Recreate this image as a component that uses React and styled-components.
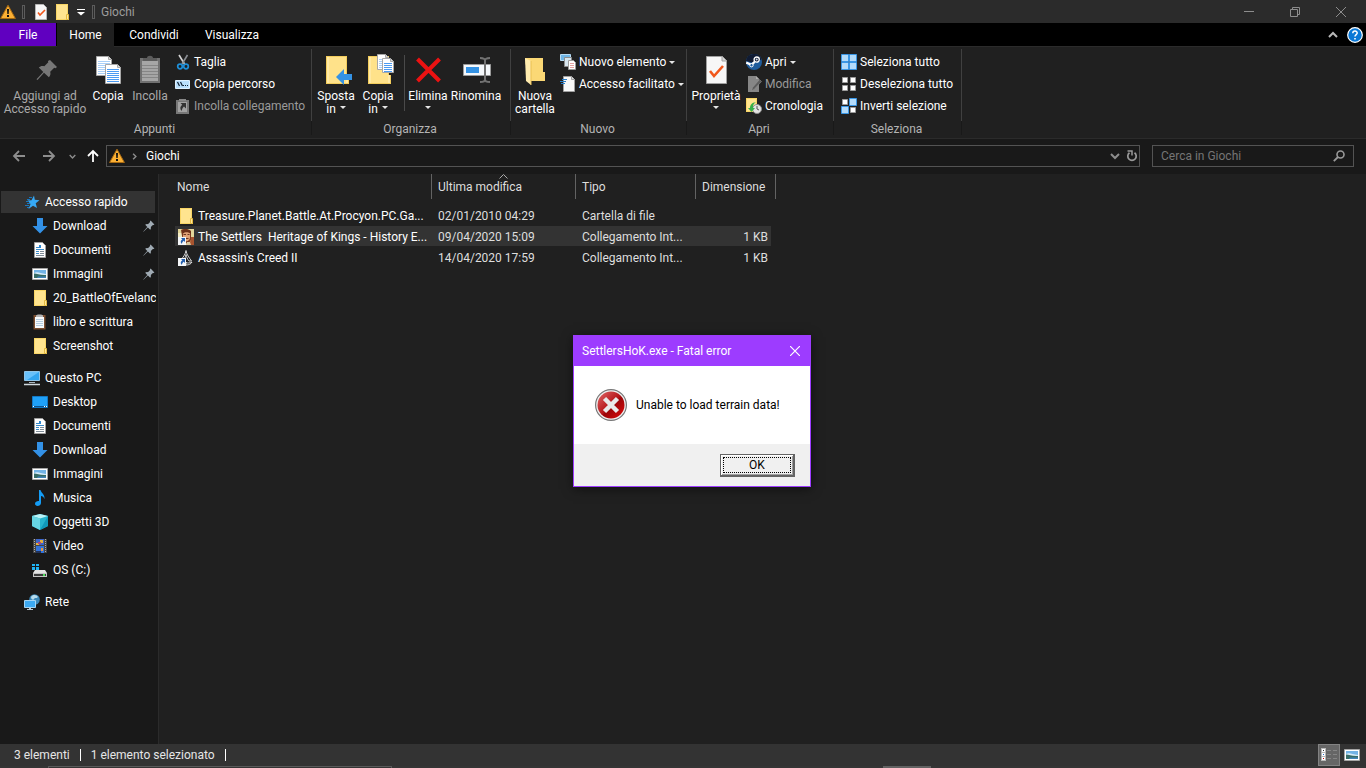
import React from 'react'
import styled, { createGlobalStyle } from 'styled-components'

const colors = {
  window: '#202020',
  panel: '#191919',
  bar: '#2b2b2b',
  selected: '#333333',
  accent: '#9d3cff',
  accentDark: '#6000c0',
  text: '#ffffff',
  muted: '#9d9d9d'
}

const GlobalStyle = createGlobalStyle`
  * {
    box-sizing: border-box;
  }
  body {
    margin: 0;
    background: ${colors.window};
    color: ${colors.text};
    font-family: Roboto, 'Open Sans', sans-serif;
    font-size: 12px;
    line-height: 16px;
  }
  button, input {
    margin: 0;
    padding: 0;
    border: 0;
    background: none;
    color: inherit;
    font: inherit;
    outline: none;
  }
  svg {
    display: block;
    flex: none;
  }
`

const Window = styled.div`
  display: flex;
  flex-direction: column;
  height: 100vh;
  overflow: hidden;
`

/* title bar */

const TitleBar = styled.header`
  display: flex;
  align-items: center;
  gap: 6px;
  height: 23px;
  flex: none;
  background: ${colors.bar};
  color: ${colors.muted};
`

const TitleSeparator = styled.span`
  width: 3px;
  height: 14px;
  border: 1px solid #5c5c5c;
`

const Title = styled.h1`
  flex: 1;
  margin: 0;
  font-size: 12px;
  font-weight: 400;
`

const WindowButtons = styled.div`
  display: flex;
  padding-right: 2px;
`

const WindowButton = styled.button`
  display: flex;
  align-items: center;
  justify-content: center;
  width: 46px;
  height: 20px;
`

/* tabs */

const Tabs = styled.nav`
  display: flex;
  height: 23px;
  flex: none;
  background: #000;
`

const Tab = styled.button`
  width: ${props => props.$width}px;
  height: 23px;
`

const FileTab = styled(Tab)`
  margin-right: 1px;
  background: ${colors.accentDark};
`

const ActiveTab = styled(Tab)`
  position: relative;
  height: 24px;
  background: ${colors.window};
`

const TabActions = styled.div`
  display: flex;
  align-items: center;
  gap: 9px;
  margin-left: auto;
  padding-right: 3px;
`

const PlainButton = styled.button`
  display: flex;
  align-items: center;
  justify-content: center;
`

/* ribbon */

const Ribbon = styled.section`
  display: flex;
  height: 93px;
  flex: none;
  border-top: 1px solid ${colors.bar};
  border-bottom: 1px solid ${colors.bar};
`

const Group = styled.div`
  display: flex;
  flex-direction: column;
  width: ${props => props.$width}px;
  padding: 0 6px 0 3px;
  background: linear-gradient(#404040 0 72px, #191919 72px) right 2px / 1px 86px no-repeat;
`

const GroupItems = styled.div`
  display: flex;
  height: 74px;
`

const GroupLabel = styled.div`
  text-align: center;
  color: #b4b4b4;
`

const BigButton = styled.button`
  display: flex;
  flex-direction: column;
  flex: none;
  align-items: center;
  width: ${props => props.$width || 42}px;
  padding-top: 7px;
  line-height: 13px;
  white-space: nowrap;
  color: ${props => (props.disabled ? '#aaaaaa' : colors.text)};

  svg:first-child {
    margin-bottom: 4px;
  }
`

const Line = styled.span`
  display: flex;
  align-items: center;
  justify-content: center;
  gap: 4px;
  height: 13px;
`

const SmallButtons = styled.div`
  display: flex;
  flex-direction: column;
  padding: 4px 0 0 4px;
`

const SmallButton = styled.button`
  display: flex;
  align-items: center;
  gap: 3px;
  height: 22px;
  white-space: nowrap;
  color: ${props => (props.disabled ? '#9a9a9a' : colors.text)};
`

const GroupDivider = styled.span`
  width: 1px;
  height: 56px;
  margin: 8px 2px 0 5px;
  background: #4a4a4a;
`

/* address bar */

const AddressBar = styled.div`
  display: flex;
  height: 35px;
  flex: none;
  padding: 6px 12px 0 0;
  background: ${colors.panel};
`

const NavButton = styled(PlainButton)`
  width: ${props => props.$width}px;
  height: 22px;
`

const AddressBox = styled.div`
  display: flex;
  align-items: center;
  flex: 1;
  height: 22px;
  margin: 0 12px 0 4px;
  border: 1px solid #535353;
  padding-left: 2px;
`

const Crumb = styled.button`
  flex: 1;
  padding-left: 3px;
  text-align: left;
`

const SearchBox = styled.label`
  display: flex;
  align-items: center;
  width: 202px;
  height: 22px;
  padding: 0 8px;
  border: 1px solid #535353;

  input {
    flex: 1;
    min-width: 0;
  }
  input::placeholder {
    color: #757575;
    opacity: 1;
  }
`

/* body */

const Body = styled.div`
  display: flex;
  flex: 1;
  min-height: 0;
`

const Sidebar = styled.nav`
  width: 159px;
  flex: none;
  padding-top: 16px;
  background: ${colors.panel};
  border-right: 1px solid ${colors.bar};
`

const TreeGroup = styled.ul`
  margin: 0 2px 10px 0;
  padding: 0;
  overflow: hidden;
  list-style: none;
`

const TreeItem = styled.li`
  display: flex;
  align-items: center;
  gap: 5px;
  height: 22px;
  margin: 0 1px 2px;
  padding-left: ${props => (props.$root ? 23 : 31)}px;
  background: ${props => (props.$selected ? colors.selected : 'none')};

  a {
    flex: 1;
    white-space: nowrap;
    color: inherit;
    text-decoration: none;
  }
  &:last-child {
    margin-bottom: 0;
  }
`

const Tree = styled.div`
  padding-top: 1px;
`

const Content = styled.main`
  flex: 1;
  padding-left: 16px;
`

const FileTable = styled.table`
  width: 601px;
  table-layout: fixed;
  border-collapse: separate;
  border-spacing: 0;

  tbody::before {
    content: '';
    display: block;
    height: 6px;
  }
`

const HeaderCell = styled.th`
  position: relative;
  width: ${props => props.$width}px;
  height: 25px;
  padding: 0 0 0 ${props => (props.$first ? 2 : 6)}px;
  border-right: 1px solid #636363;
  font-weight: 400;
  text-align: left;
  color: #dedede;
`

const SortMark = styled.svg`
  position: absolute;
  top: 0;
  left: calc(50% - 5px);
`

const Cell = styled.td`
  height: 21px;
  padding: 0 8px 0 6px;
  overflow: hidden;
  white-space: nowrap;
  color: #dedede;
  text-align: ${props => (props.$right ? 'right' : 'left')};
`

const NameCell = styled(Cell)`
  padding: 0 0 0 3px;
  color: ${colors.text};
`

const FileName = styled.span`
  display: flex;
  align-items: center;
  gap: 4px;

  span {
    white-space: pre;
  }
`

const FileRow = styled.tr`
  td {
    background: ${props =>
      props.$selected
        ? `linear-gradient(${colors.selected}, ${colors.selected}) 0 0 / 100% 20px no-repeat`
        : 'none'};
  }
  td:last-child {
    background-size: calc(100% - 5px) 20px;
  }
`

/* status bar */

const StatusBar = styled.footer`
  display: flex;
  align-items: center;
  gap: 10px;
  height: 22px;
  flex: none;
  padding: 0 7px 0 14px;
  background: ${colors.selected};
  color: #e6e6e6;
`

const StatusSeparator = styled.span`
  width: 1px;
  height: 12px;
  background: #fff;
`

const ViewButtons = styled.div`
  display: flex;
  align-items: center;
  gap: 4px;
  margin-left: auto;
`

const ViewButton = styled(PlainButton)`
  height: 22px;
  width: ${props => (props.$active ? 22 : 15)}px;
  background: ${props => (props.$active ? '#666666' : 'none')};
  border: ${props => (props.$active ? '1px solid #838383' : '0')};
`

const TaskbarEdge = styled.div`
  display: flex;
  justify-content: space-between;
  height: 2px;
  flex: none;
  padding: 0 435px 0 48px;
  background: #353535;
`

const TaskbarSearch = styled.span`
  width: 344px;
  border: 1px solid #5a5a5a;
  border-bottom: 0;
`

const TaskbarApp = styled.span`
  width: 48px;
  background: #626262;
`

/* error dialog */

const Dialog = styled.div`
  position: absolute;
  top: 335px;
  left: 573px;
  width: 238px;
  border: 1px solid ${colors.accent};
  background: #fff;
  color: #000;
  box-shadow: 0 2px 10px rgba(0, 0, 0, 0.5);
`

const DialogTitle = styled.div`
  display: flex;
  align-items: center;
  justify-content: space-between;
  height: 30px;
  padding: 0 10px 0 8px;
  background: ${colors.accent};
  color: #fff;
`

const DialogBody = styled.div`
  display: flex;
  align-items: center;
  gap: 9px;
  height: 78px;
  padding-left: 21px;
`

const DialogFooter = styled.div`
  display: flex;
  align-items: center;
  justify-content: flex-end;
  height: 42px;
  padding-right: 15px;
  background: #f0f0f0;
`

const OkButton = styled.button`
  width: 75px;
  height: 23px;
  border: 1px solid #646464;
  border-right-width: 2px;
  border-bottom-width: 2px;
  background: #f0f0f0;
  box-shadow: inset 1px 1px #fff, inset -1px -1px #a0a0a0;
  line-height: 14px;

  span {
    display: block;
    margin: 0 2px;
    border: 1px dotted #000;
  }
`

/* icons */

const WarningIcon = () => (
  <svg width="16" height="16" viewBox="0 0 16 16">
    <path d="M8 1.2 15.4 14.5H.6z" fill="#fbb034" stroke="#a86a12" strokeLinejoin="round" />
    <path d="M7 5h2l-.3 5H7.3zM7 11h2v2H7z" fill="#111" />
  </svg>
)

const FolderIcon = () => (
  <svg width="16" height="16" viewBox="0 0 16 16">
    <path d="M2 0h12v12h1v4H2z" fill="#f8d565" />
    <path d="M3 1h10v14H3z" fill="#ffe48f" />
    <path d="M12.5 10.5h2v5h-2z" fill="#ffe79b" stroke="#e3b93f" />
  </svg>
)

const CheckDocIcon = () => (
  <svg width="32" height="32" viewBox="0 0 32 32">
    <path d="M6.5 2.5h16l4 4v23h-20z" fill="#f7f7f7" stroke="#a0a0a0" />
    <path d="M22 2.5V7h4.5" fill="#d5d5d5" stroke="#a0a0a0" />
    <path d="m10 17 4 5 9-10" fill="none" stroke="#f1571b" strokeWidth="2.6" />
  </svg>
)

const Caret = () => (
  <svg width="6" height="3" viewBox="0 0 6 3">
    <path d="M0 0h6L3 3z" fill="#e6e6e6" />
  </svg>
)

const ChevronIcon = ({ color = '#8d8d8d', size = 10, turn = 0, stroke = 2 }) => (
  <svg width={size} height={size} viewBox="0 0 10 10">
    <path
      d="m1 3 4 4 4-4"
      fill="none"
      stroke={color}
      strokeWidth={stroke}
      transform={`rotate(${turn} 5 5)`}
    />
  </svg>
)

const ArrowIcon = ({ color = '#8d8d8d', turn = 0 }) => (
  <svg width="14" height="14" viewBox="0 0 14 14">
    <path
      d="M13 7H2M7 2 2 7l5 5"
      fill="none"
      stroke={color}
      strokeWidth="1.8"
      transform={`rotate(${turn} 7 7)`}
    />
  </svg>
)

const HelpIcon = () => (
  <svg width="16" height="16" viewBox="0 0 16 16">
    <circle cx="8" cy="8" r="7.3" fill="#0a78d6" stroke="#fff" strokeWidth="1.2" />
    <path d="M5.8 6.3c0-3 4.4-2.8 4.4-.3C10.2 7.6 8 7.7 8 9.6" fill="none" stroke="#fff" strokeWidth="1.5" />
    <path d="M7.2 11h1.6v1.5H7.2z" fill="#fff" />
  </svg>
)

const PinIcon = () => (
  <svg width="12" height="12" viewBox="0 0 12 12">
    <path
      d="m7.6.6 3.8 3.8-.9.7-.6-.2-2.1 2.2c.3 1.1.1 2-.6 2.7L4.900 7.500.5 11.700.3 11.500 4.300 7 2.200 4.800c.7-.7 1.700-.9 2.700-.6l2.200-2.100-.2-.7z"
      fill="#a0abb4"
    />
  </svg>
)

const PinBigIcon = () => (
  <svg width="32" height="32" viewBox="0 0 32 32">
    <path
      d="m21 6 7 7-1.5 1.2-1.3-.4-4 4c.6 2.2.2 4-1.3 5.500L15 18.700 8.500 26l-1-.8 6.800-7.200L9.800 13.500c1.400-1.500 3.300-1.900 5.500-1.300l4-4-.4-1.300z"
      fill="#777"
    />
  </svg>
)

const Page = ({ x, y, w = 14, h = 19, line = '#4b9bf2', lines = 6 }) => (
  <g transform={`translate(${x} ${y})`}>
    <path d={`M.5.5h${w - 4}l3 3v${h - 4}H.5z`} fill="#fff" stroke="#a8a8a8" />
    <path d={`M${w - 3.5}.5v3h3`} fill="#ddd" stroke="#a8a8a8" />
    {Array.from({ length: lines }, (_, i) => (
      <path key={i} d={`M2 ${5.5 + i * 2}h${w - 4}`} stroke={line} />
    ))}
  </g>
)

const CopyIcon = () => (
  <svg width="32" height="32" viewBox="0 0 32 32">
    <Page x={4} y={2} w={16} h={20} line="#a9d0f8" lines={7} />
    <Page x={13} y={10} w={16} h={20} lines={7} />
  </svg>
)

const PasteIcon = () => (
  <svg width="32" height="32" viewBox="0 0 32 32">
    <path d="M6 4h20v25H6z" fill="#717171" />
    <path d="M8 7h16v20H8z" fill="#a6a6a6" />
    <path d="M9 7V4h4c0-3 6-3 6 0h4v3z" fill="#5c5c5c" />
    <path d="M8 11.5h16M8 14.5h16M8 17.5h16M8 20.5h16M8 23.5h16" stroke="#868686" />
  </svg>
)

const CutIcon = () => (
  <svg width="16" height="16" viewBox="0 0 16 16">
    <path d="m4 1 5.500 9" stroke="#d5d5d5" strokeWidth="1.6" />
    <path d="M12.5 1 7 10" stroke="#8b8f94" strokeWidth="1.6" />
    <circle cx="5" cy="12.5" r="2.3" fill="none" stroke="#1e8fd8" strokeWidth="1.7" />
    <circle cx="11" cy="12.5" r="2.3" fill="none" stroke="#1e8fd8" strokeWidth="1.7" />
  </svg>
)

const CopyPathIcon = () => (
  <svg width="16" height="16" viewBox="0 0 16 16">
    <path d="M.5 4.5h14v8H.5z" fill="#b9dffb" stroke="#dff1ff" />
    <path d="m2.5 6 2 4M5.5 6l2 4" stroke="#112233" strokeWidth="1.2" />
    <path d="M8 9.5h1M10 9.5h1M12 9.5h1" stroke="#112233" />
  </svg>
)

const PasteLinkIcon = () => (
  <svg width="16" height="16" viewBox="0 0 16 16">
    <path d="M1 2h13v14H1z" fill="#777" />
    <path d="M3 4h9v10H3z" fill="#a2a2a2" />
    <path d="M4 1h7v2H4z" fill="#888" />
    <path d="M5.5 5H11v5.500L9 8.500C7.500 10 7 11 6.800 13 4.500 11 5 8.800 7.200 6.800z" fill="#333" />
  </svg>
)

const BigFolder = () => (
  <>
    <path d="M6 2h21v19h2v9H6z" fill="#f3cd5c" />
    <path d="M7 3h19v26H7z" fill="#ffe28a" />
    <path d="M8 3v26" stroke="#fff0bd" />
    <path d="M26 21h2v8h-2z" fill="#ffe9a8" />
  </>
)

const MoveToIcon = () => (
  <svg width="32" height="32" viewBox="0 0 32 32">
    <BigFolder />
    <path d="m16 23 8-8v5h8v6h-8v5z" fill="#3492e4" />
  </svg>
)

const CopyToIcon = () => (
  <svg width="32" height="32" viewBox="0 0 32 32">
    <BigFolder />
    <Page x={15} y={0} w={12} h={16} line="#a9d0f8" lines={5} />
    <Page x={20} y={4} w={12} h={15} lines={5} />
  </svg>
)

const DeleteIcon = () => (
  <svg width="32" height="32" viewBox="0 0 32 32">
    <path d="m5.5 5 22 22m0-22-22 22" stroke="#ec1212" strokeWidth="4" />
  </svg>
)

const RenameIcon = () => (
  <svg width="32" height="32" viewBox="0 0 32 32">
    <path d="M3.5 10.5h27v11h-27z" fill="#f5f8fb" stroke="#9b9b9b" />
    <path d="M6 13h13v6H6z" fill="#3492e4" />
    <path d="M20 4c3 0 5 .5 5 2.5v19c0 2-2 2.5-5 2.5M30 4c-3 0-5 .5-5 2.5v19c0 2 2 2.5 5 2.5" fill="none" stroke="#727272" strokeWidth="2" />
  </svg>
)

const NewFolderIcon = () => (
  <svg width="32" height="32" viewBox="0 0 32 32">
    <path d="M6 4h18v14h2v9H9z" fill="#fbd875" />
    <path d="m6 4 6 3v24l-5-4z" fill="#ffebae" />
    <path d="M12 7v24" stroke="#eabf52" />
  </svg>
)

const NewItemIcon = () => (
  <svg width="16" height="16" viewBox="0 0 16 16">
    <path d="M.5.5h10v6H.5z" fill="#6fb5e6" stroke="#b7dcf5" />
    <path d="M4.5 3.5h7v9h-7z" fill="#d7e6ef" stroke="#8c8c8c" />
    <path d="M8.5 6.5h5l2 2v7h-7z" fill="#fff" stroke="#9b9b9b" />
    <path d="M10 9.5h4M10 11.5h4M10 13.5h4" stroke="#e4a3a3" />
  </svg>
)

const EasyAccessIcon = () => (
  <svg width="16" height="16" viewBox="0 0 16 16">
    <path d="M3.5.5h8l3 3v12h-11z" fill="#f8f8f8" stroke="#a0a0a0" />
    <path d="M11.5.5v3h3" fill="#ddd" stroke="#a0a0a0" />
    <path d="M2 3.5h5M0 5.5h6M1 7.5h4" stroke="#2a7fc9" />
  </svg>
)

const SteamIcon = () => (
  <svg width="16" height="16" viewBox="0 0 16 16">
    <circle cx="8" cy="8" r="8" fill="#1f5c9c" />
    <path d="M0 7a8 8 0 0 1 15.5-1.5L8 9z" fill="#101b33" />
    <circle cx="10.7" cy="5.6" r="2.6" fill="#101b33" stroke="#fff" strokeWidth="1.3" />
    <circle cx="10.7" cy="5.6" r="1" fill="#cfd9e6" />
    <path d="m.2 8.600 5 2.200 3.500-3" fill="none" stroke="#fff" strokeWidth="2.2" />
    <circle cx="5.5" cy="11.2" r="1.7" fill="#1f5c9c" stroke="#fff" />
  </svg>
)

const EditIcon = () => (
  <svg width="16" height="16" viewBox="0 0 16 16">
    <path d="M2 0h8l3 3v13H2z" fill="#868686" />
    <path d="M10 0v3h3" fill="#adadad" />
    <path d="m5.5 15 1-3.5 7-8 2 2-7.5 8z" fill="#5d5d5d" stroke="#999" strokeWidth=".5" />
  </svg>
)

const HistoryIcon = () => (
  <svg width="16" height="16" viewBox="0 0 16 16">
    <path d="M0 0h11v14H0z" fill="#f8d565" />
    <path d="M1 1h9v12H1z" fill="#ffe48f" />
    <circle cx="11" cy="11" r="4.5" fill="#e3e3e3" stroke="#8f8f8f" />
    <path d="M11 8v3l2 1" fill="none" stroke="#555" />
    <path d="M2 10h2c0-4 3-6 6-5.500C7.500 5.500 7 7 7 10h2l-3.500 4z" fill="#37b04a" />
  </svg>
)

const Tiles = ({ on }) => (
  <svg width="16" height="16" viewBox="0 0 16 16">
    {[0, 1, 2, 3].map(i => {
      const x = (i % 2) * 8
      const y = i > 1 ? 8 : 0
      return on[i] ? (
        <path key={i} d={`M${x + 0.5} ${y + 0.5}h7v7h-7z`} fill="#b3dbfa" stroke="#3a97e6" />
      ) : (
        <path key={i} d={`M${x + 1.5} ${y + 1.5}h5v5h-5z`} fill="#fff" stroke="#9c9c9c" />
      )
    })}
  </svg>
)

const StarIcon = () => (
  <svg width="16" height="16" viewBox="0 0 16 16">
    <path d="m10 1.500.8 4.300 4.700.4-3.800 3 1.300 4.800-4-2.300-4.500 3.300L6.500 10 3.500 6.500l4-.3z" fill="#36a9f5" />
    <path d="M5 3.5h3M3 5.5h3M2 7.5h3M3 9.5h3M1 11.5h4M3 13.5h2" stroke="#1976bd" />
  </svg>
)

const DownloadIcon = () => (
  <svg width="16" height="16" viewBox="0 0 16 16">
    <path d="M5 0h6v8h4.500L8 15.500.5 8H5z" fill="#3391e6" />
  </svg>
)

const DocumentIcon = () => (
  <svg width="16" height="16" viewBox="0 0 16 16">
    <path d="M2.5.5h8l3 3v12h-11z" fill="#fff" stroke="#a0a0a0" />
    <path d="M4 5.5h3M4 7.5h8M4 9.5h3M4 11.5h3" stroke="#3a8bc9" />
    <path d="M7 3h2v3H7z" fill="#2f88d0" />
    <path d="M8 9.5h4M8 11.5h4M4 13.5h8" stroke="#7e8b96" />
  </svg>
)

const PictureIcon = () => (
  <svg width="16" height="16" viewBox="0 0 16 16">
    <path d="M.5 2.5h15v11H.5z" fill="#fff" stroke="#a5a5a5" />
    <path d="M2 4h12v8H2z" fill="#72b3e6" />
    <path d="M2 7c3-2 6 0 12 1v1H2z" fill="#d5ebf8" />
    <path d="M2 7.500c3 0 6 2 12 1.500v3H2z" fill="#366c67" />
    <path d="M6 10.5h8V12H5z" fill="#4184b8" />
  </svg>
)

const ClipboardIcon = () => (
  <svg width="16" height="16" viewBox="0 0 16 16">
    <path d="M1.5 1h12v14.500h-12z" fill="#7b4d2e" />
    <path d="M3 3h9v11H3z" fill="#f7fafc" />
    <path d="M4 1.500C4 0 11 0 11 1.500V3H4z" fill="#b4b4b4" />
    <path d="M4 5.5h7M4 7.5h7M4 9.5h7M4 11.5h7" stroke="#b5cde0" />
  </svg>
)

const PcIcon = () => (
  <svg width="16" height="16" viewBox="0 0 16 16">
    <path d="M.5 1.5h15v9H.5z" fill="#33a5f0" stroke="#90c4e8" />
    <path d="M1 2h14L3 10H1z" fill="#68c0fa" />
    <path d="M5 12.5h6" stroke="#aab6bf" />
    <path d="M0 14.5h16" stroke="#cfd8df" strokeWidth="1.5" />
  </svg>
)

const DesktopIcon = () => (
  <svg width="16" height="16" viewBox="0 0 16 16">
    <path d="M.5 2.5h15v11H.5z" fill="#1fa0f7" stroke="#1378c4" />
    <path d="M1 12.5h14" stroke="#0b518c" />
    <path d="M1 12.5h1M12 12.5h1M14 12.5h1" stroke="#fff" />
  </svg>
)

const MusicIcon = () => (
  <svg width="16" height="16" viewBox="0 0 16 16">
    <path d="M7 0h1.500c.5 3 4.500 4 4 9-.8-2-2-2.800-3.500-3v7c0 3.500-6 4-6 .8C3 11.500 5.500 10.700 7 11z" fill="#149cf5" />
  </svg>
)

const CubeIcon = () => (
  <svg width="16" height="16" viewBox="0 0 16 16">
    <path d="m8 0 8 2v10l-8 4-8-4V2z" fill="#27b4cd" />
    <path d="m8 0 8 2-8 2.500L0 2z" fill="#baf1f6" />
    <path d="m0 2 8 2.500V16l-8-4z" fill="#67d5e3" />
    <path d="m8 16 8-4V2z" fill="#1098b9" />
  </svg>
)

const VideoIcon = () => (
  <svg width="16" height="16" viewBox="0 0 16 16">
    <path d="M1 1h14v14H1z" fill="#444" />
    <path d="M2.5 1v14M13.5 1v14" stroke="#aaa" strokeDasharray="1 1" />
    <path d="M4 1h8v6H4z" fill="#3b65c9" />
    <path d="M4 8h8v7H4z" fill="#3272d8" />
    <path d="M4 5h3v2H4zM8 2h3v3H8z" fill="#e3b23b" />
    <path d="M6 4h3v2H6z" fill="#b44676" />
    <path d="M9 10h2v3H9z" fill="#e8963a" />
    <path d="M4 13h5v2H4z" fill="#20335e" />
  </svg>
)

const DriveIcon = () => (
  <svg width="16" height="16" viewBox="0 0 16 16">
    <path d="M0 2h3v2H0zM4 2h3v2H4zM0 5h3v3H0zM4 5h3v3H4z" fill="#1fb3f4" />
    <path d="M3 8h10l2 3H1z" fill="#e3e3e3" />
    <path d="M1 11h14v4H1z" fill="#c4c4c4" />
    <path d="M2 12h12v2H2z" fill="#3b3b3b" />
    <path d="M11 12h2v2h-2z" fill="#49e05a" />
  </svg>
)

const NetworkIcon = () => (
  <svg width="16" height="16" viewBox="0 0 16 16">
    <circle cx="10.5" cy="5.5" r="5.3" fill="#3b87b8" />
    <path d="M7 3c2-3 6-2 7 0-2 2-3 0-4 2S7 5 7 3z" fill="#b6dced" />
    <path d="M.5 6.5h11v7H.5z" fill="#3ca9f2" stroke="#a5d4f3" />
    <path d="M5 14h2v1h2v1H3v-1h2z" fill="#bccbd6" />
  </svg>
)

const ShortcutArrow = () => (
  <>
    <path d="M0 8h8v8H0z" fill="#f4f6f8" />
    <path d="M3 9h4v4l-1.300-1.300C4.500 12.500 4 13.500 4 15c-2-2-1.300-3.800.4-4.600z" fill="#245fae" />
  </>
)

const SettlersIcon = () => (
  <svg width="16" height="16" viewBox="0 0 16 16">
    <path d="M0 0h16v16H0z" fill="#e3d69a" />
    <path d="M0 4h4v5H0z" fill="#f3ecc4" />
    <path d="M3 1c3-2 8-1 10 1v9l-3 4-5-2z" fill="#7a3a20" />
    <path d="M5 3c2-1 5-1 7 0v6c-1 4-5 4-7 1z" fill="#e0a276" />
    <path d="M4 2c2-2.500 7-2.500 9 1v2c-2-2-6-2.500-8-.5z" fill="#6b2f18" />
    <path d="M5.5 5.5H8M9.5 5.5h2M7.5 9.5h3" stroke="#6d3520" />
    <path d="M13 8h3v8H9c3-2 4-4 4-8z" fill="#a8542f" />
    <path d="M9 13h3l1 3H8z" fill="#d9c8a0" />
    <ShortcutArrow />
  </svg>
)

const AssassinIcon = () => (
  <svg width="16" height="16" viewBox="0 0 16 16">
    <path d="M8 .5c.5 4 3 7 5.500 10.500h-2.500C9.500 9 8.500 7 8 4.500 7.500 7 6.500 9 5 11H2.500C5 7 7.500 4.500 8 .5z" fill="#111" stroke="#fff" strokeWidth=".8" />
    <path d="M8 12.500c2 1 4 .5 6-.5-1 2-3 3-6 3z" fill="#111" stroke="#fff" strokeWidth=".8" />
    <ShortcutArrow />
  </svg>
)

const ErrorIcon = () => (
  <svg width="32" height="32" viewBox="0 0 32 32">
    <defs>
      <linearGradient id="error-red" x1="0" y1="0" x2="1" y2="1">
        <stop offset="0" stopColor="#e06a6a" />
        <stop offset=".5" stopColor="#b51418" />
        <stop offset=".55" stopColor="#990508" />
        <stop offset="1" stopColor="#e30b0b" />
      </linearGradient>
    </defs>
    <circle cx="16" cy="16" r="15.4" fill="#f1f1f1" stroke="#777" strokeWidth="1.2" />
    <circle cx="16" cy="16" r="13.5" fill="url(#error-red)" />
    <path d="m9.500 9.500 13 13m0-13-13 13" stroke="#e9e9e9" strokeWidth="4.5" />
  </svg>
)

const quickAccess = [
  { name: 'Download', icon: <DownloadIcon />, pinned: true },
  { name: 'Documenti', icon: <DocumentIcon />, pinned: true },
  { name: 'Immagini', icon: <PictureIcon />, pinned: true },
  { name: '20_BattleOfEvelance', icon: <FolderIcon /> },
  { name: 'libro e scrittura', icon: <ClipboardIcon /> },
  { name: 'Screenshot', icon: <FolderIcon /> }
]

const thisPc = [
  { name: 'Desktop', icon: <DesktopIcon /> },
  { name: 'Documenti', icon: <DocumentIcon /> },
  { name: 'Download', icon: <DownloadIcon /> },
  { name: 'Immagini', icon: <PictureIcon /> },
  { name: 'Musica', icon: <MusicIcon /> },
  { name: 'Oggetti 3D', icon: <CubeIcon /> },
  { name: 'Video', icon: <VideoIcon /> },
  { name: 'OS (C:)', icon: <DriveIcon /> }
]

const files = [
  {
    name: 'Treasure.Planet.Battle.At.Procyon.PC.Ga...',
    icon: <FolderIcon />,
    date: '02/01/2010 04:29',
    type: 'Cartella di file',
    size: ''
  },
  {
    name: 'The Settlers  Heritage of Kings - History E...',
    icon: <SettlersIcon />,
    date: '09/04/2020 15:09',
    type: 'Collegamento Int...',
    size: '1 KB',
    selected: true
  },
  {
    name: "Assassin's Creed II",
    icon: <AssassinIcon />,
    date: '14/04/2020 17:59',
    type: 'Collegamento Int...',
    size: '1 KB'
  }
]

const TreeEntry = ({ icon, name, pinned, root, selected }) => (
  <TreeItem $root={root} $selected={selected}>
    {icon}
    <a href="#">{name}</a>
    {pinned && <PinIcon />}
  </TreeItem>
)

const RibbonGroup = ({ label, width, children }) => (
  <Group $width={width}>
    <GroupItems>{children}</GroupItems>
    <GroupLabel>{label}</GroupLabel>
  </Group>
)

const RibbonBar = () => (
  <Ribbon>
    <RibbonGroup label="Appunti" width={312}>
      <BigButton $width={84} disabled>
        <PinBigIcon />
        <Line>Aggiungi ad</Line>
        <Line>Accesso rapido</Line>
      </BigButton>
      <BigButton>
        <CopyIcon />
        <Line>Copia</Line>
      </BigButton>
      <BigButton disabled>
        <PasteIcon />
        <Line>Incolla</Line>
      </BigButton>
      <SmallButtons>
        <SmallButton><CutIcon /><span>Taglia</span></SmallButton>
        <SmallButton><CopyPathIcon /><span>Copia percorso</span></SmallButton>
        <SmallButton disabled><PasteLinkIcon /><span>Incolla collegamento</span></SmallButton>
      </SmallButtons>
    </RibbonGroup>
    <RibbonGroup label="Organizza" width={199}>
      <BigButton>
        <MoveToIcon />
        <Line>Sposta</Line>
        <Line>in <Caret /></Line>
      </BigButton>
      <BigButton>
        <CopyToIcon />
        <Line>Copia</Line>
        <Line>in <Caret /></Line>
      </BigButton>
      <GroupDivider />
      <BigButton>
        <DeleteIcon />
        <Line>Elimina</Line>
        <Line><Caret /></Line>
      </BigButton>
      <BigButton $width={54}>
        <RenameIcon />
        <Line>Rinomina</Line>
      </BigButton>
    </RibbonGroup>
    <RibbonGroup label="Nuovo" width={176}>
      <BigButton>
        <NewFolderIcon />
        <Line>Nuova</Line>
        <Line>cartella</Line>
      </BigButton>
      <SmallButtons>
        <SmallButton><NewItemIcon /><span>Nuovo elemento</span><Caret /></SmallButton>
        <SmallButton><EasyAccessIcon /><span>Accesso facilitato</span><Caret /></SmallButton>
      </SmallButtons>
    </RibbonGroup>
    <RibbonGroup label="Apri" width={147}>
      <BigButton $width={52}>
        <CheckDocIcon />
        <Line>Proprietà</Line>
        <Line><Caret /></Line>
      </BigButton>
      <SmallButtons>
        <SmallButton><SteamIcon /><span>Apri</span><Caret /></SmallButton>
        <SmallButton disabled><EditIcon /><span>Modifica</span></SmallButton>
        <SmallButton><HistoryIcon /><span>Cronologia</span></SmallButton>
      </SmallButtons>
    </RibbonGroup>
    <RibbonGroup label="Seleziona" width={128}>
      <SmallButtons>
        <SmallButton><Tiles on={[1, 1, 1, 1]} /><span>Seleziona tutto</span></SmallButton>
        <SmallButton><Tiles on={[0, 0, 0, 0]} /><span>Deseleziona tutto</span></SmallButton>
        <SmallButton><Tiles on={[0, 1, 1, 0]} /><span>Inverti selezione</span></SmallButton>
      </SmallButtons>
    </RibbonGroup>
  </Ribbon>
)

const ErrorDialog = () => (
  <Dialog role="alertdialog" aria-label="Fatal error">
    <DialogTitle>
      SettlersHoK.exe - Fatal error
      <PlainButton aria-label="Chiudi">
        <svg width="10" height="10" viewBox="0 0 10 10">
          <path d="m0 0 10 10m0-10L0 10" stroke="#fff" strokeWidth="1.2" />
        </svg>
      </PlainButton>
    </DialogTitle>
    <DialogBody>
      <ErrorIcon />
      Unable to load terrain data!
    </DialogBody>
    <DialogFooter>
      <OkButton><span>OK</span></OkButton>
    </DialogFooter>
  </Dialog>
)

const App = () => (
  <>
    <GlobalStyle />
    <Window>
      <TitleBar>
        <WarningIcon />
        <TitleSeparator />
        <PlainButton aria-label="Proprietà">
          <svg width="17" height="16" viewBox="0 0 17 16">
            <path d="M4.5.5h8l3 3v12h-11z" fill="#f7f7f7" stroke="#b5b5b5" />
            <path d="m7 8.500 2 2.500 5-5" fill="none" stroke="#f1571b" strokeWidth="1.6" />
          </svg>
        </PlainButton>
        <PlainButton aria-label="Nuova cartella"><FolderIcon /></PlainButton>
        <PlainButton aria-label="Personalizza">
          <svg width="10" height="8" viewBox="0 0 10 8">
            <path d="M1 1.5h8" stroke="#fff" />
            <path d="M1 4h8L5 7.500z" fill="#fff" />
          </svg>
        </PlainButton>
        <TitleSeparator />
        <Title>Giochi</Title>
        <WindowButtons>
          <WindowButton aria-label="Riduci a icona">
            <svg width="10" height="10" viewBox="0 0 10 10">
              <path d="M0 4.5h10" stroke="#8d8d8d" />
            </svg>
          </WindowButton>
          <WindowButton aria-label="Ripristina">
            <svg width="10" height="10" viewBox="0 0 10 10">
              <path d="M.5 2.5h7v7h-7zM2.5 2V.5h7v7H8" fill="none" stroke="#8d8d8d" />
            </svg>
          </WindowButton>
          <WindowButton aria-label="Chiudi">
            <svg width="10" height="10" viewBox="0 0 10 10">
              <path d="m0 0 10 10m0-10L0 10" stroke="#8d8d8d" />
            </svg>
          </WindowButton>
        </WindowButtons>
      </TitleBar>

      <Tabs>
        <FileTab $width={56}>File</FileTab>
        <ActiveTab $width={57}>Home</ActiveTab>
        <Tab $width={80}>Condividi</Tab>
        <Tab $width={76}>Visualizza</Tab>
        <TabActions>
          <PlainButton aria-label="Riduci barra multifunzione">
            <ChevronIcon color="#b9b9b9" turn={180} />
          </PlainButton>
          <PlainButton aria-label="Guida"><HelpIcon /></PlainButton>
        </TabActions>
      </Tabs>

      <RibbonBar />

      <AddressBar>
        <NavButton $width={38} aria-label="Indietro"><ArrowIcon /></NavButton>
        <NavButton $width={22} aria-label="Avanti"><ArrowIcon turn={180} /></NavButton>
        <NavButton $width={24} aria-label="Percorsi recenti"><ChevronIcon size={7} /></NavButton>
        <NavButton $width={18} aria-label="Su"><ArrowIcon color="#fff" turn={90} /></NavButton>
        <AddressBox>
          <WarningIcon />
          <NavButton $width={18} aria-label="Espandi"><ChevronIcon size={7} turn={-90} /></NavButton>
          <Crumb>Giochi</Crumb>
          <NavButton $width={18} aria-label="Posizioni precedenti"><ChevronIcon /></NavButton>
          <NavButton $width={15} aria-label="Aggiorna">
            <svg width="12" height="12" viewBox="0 0 12 12">
              <path d="M8.5 2.800a4.200 4.200 0 1 1-5 0" fill="none" stroke="#999" strokeWidth="1.7" />
              <path d="M1.5 1H6v4.500" fill="none" stroke="#999" strokeWidth="1.5" />
            </svg>
          </NavButton>
        </AddressBox>
        <SearchBox>
          <input type="text" placeholder="Cerca in Giochi" aria-label="Cerca in Giochi" />
          <svg width="12" height="12" viewBox="0 0 12 12">
            <circle cx="7.5" cy="4.5" r="3.5" fill="none" stroke="#999" strokeWidth="1.6" />
            <path d="M5 7 .8 11.200" stroke="#999" strokeWidth="1.8" />
          </svg>
        </SearchBox>
      </AddressBar>

      <Body>
        <Sidebar>
          <Tree>
            <TreeGroup>
              <TreeEntry root selected name="Accesso rapido" icon={<StarIcon />} />
              {quickAccess.map(item => <TreeEntry key={item.name} {...item} />)}
            </TreeGroup>
            <TreeGroup>
              <TreeEntry root name="Questo PC" icon={<PcIcon />} />
              {thisPc.map(item => <TreeEntry key={item.name} {...item} />)}
            </TreeGroup>
            <TreeGroup>
              <TreeEntry root name="Rete" icon={<NetworkIcon />} />
            </TreeGroup>
          </Tree>
        </Sidebar>
        <Content>
          <FileTable>
            <thead>
              <tr>
                <HeaderCell $width={257} $first>Nome</HeaderCell>
                <HeaderCell $width={144}>
                  Ultima modifica
                  <SortMark width="9" height="5" viewBox="0 0 9 5">
                    <path d="m.5 4.500 4-4 4 4" fill="none" stroke="#aaa" />
                  </SortMark>
                </HeaderCell>
                <HeaderCell $width={120}>Tipo</HeaderCell>
                <HeaderCell $width={80}>Dimensione</HeaderCell>
              </tr>
            </thead>
            <tbody>
              {files.map(file => (
                <FileRow key={file.name} $selected={file.selected}>
                  <NameCell>
                    <FileName>{file.icon}<span>{file.name}</span></FileName>
                  </NameCell>
                  <Cell>{file.date}</Cell>
                  <Cell>{file.type}</Cell>
                  <Cell $right>{file.size}</Cell>
                </FileRow>
              ))}
            </tbody>
          </FileTable>
        </Content>
      </Body>

      <StatusBar>
        <span>3 elementi</span>
        <StatusSeparator />
        <span>1 elemento selezionato</span>
        <StatusSeparator />
        <ViewButtons>
          <ViewButton $active aria-label="Dettagli">
            <svg width="16" height="14" viewBox="0 0 16 14">
              <path d="M0 0h5v13H0z" fill="#b9b9b9" />
              <path d="M1 1h3v3H1zM1 5h3v3H1zM1 9h3v3H1z" fill="#fff" />
              <path d="M2 2h1v1H2z" fill="#333" />
              <path d="M2 6h1v1H2z" fill="#2a6fd0" />
              <path d="M2 10h1v1H2z" fill="#c00" />
              <path d="M6 2.5h4M12 2.5h4M6 6.5h4M12 6.5h4M6 10.5h4M12 10.5h4" stroke="#858585" />
            </svg>
          </ViewButton>
          <ViewButton aria-label="Icone grandi"><PictureIcon /></ViewButton>
        </ViewButtons>
      </StatusBar>
      <TaskbarEdge>
        <TaskbarSearch />
        <TaskbarApp />
      </TaskbarEdge>
    </Window>
    <ErrorDialog />
  </>
)

export default App
